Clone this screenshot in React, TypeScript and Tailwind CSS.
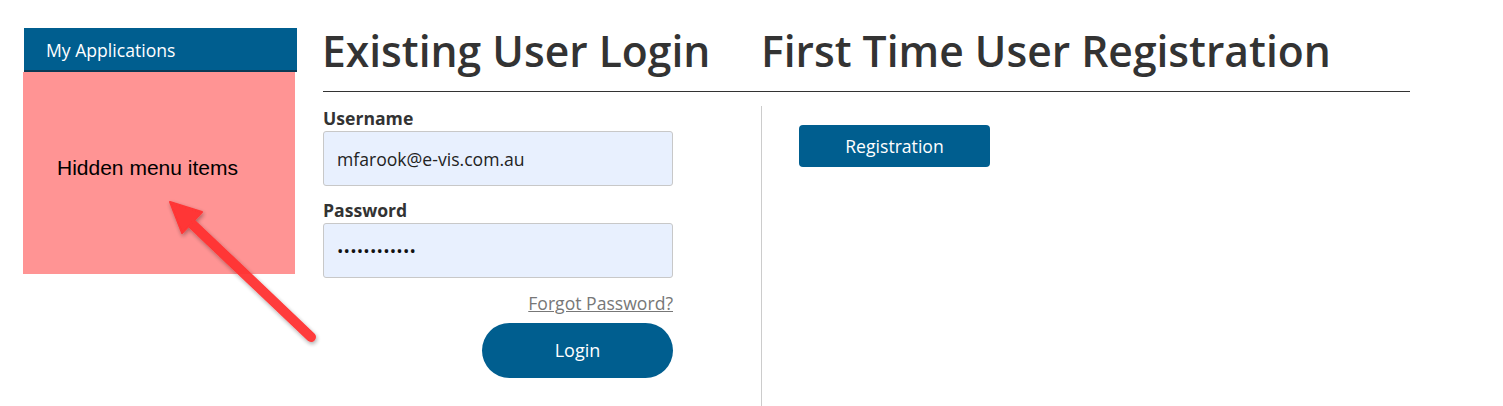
import React from "react";

const OS = "font-['Open_Sans',sans-serif]";

function Arrow() {
  return (
    <svg
      className="absolute left-0 top-0 pointer-events-none"
      width="360"
      height="406"
      viewBox="0 0 360 406"
    >
      <defs>
        <filter id="sh" x="-20%" y="-20%" width="140%" height="140%">
          <feDropShadow dx="1" dy="2" stdDeviation="2" floodColor="#000" floodOpacity="0.35" />
        </filter>
      </defs>
      <g filter="url(#sh)" opacity="0.95">
        <line x1="311" y1="337" x2="190" y2="222" stroke="#ff3030" strokeWidth="10" strokeLinecap="round" />
        <polygon points="170,202 202,212 182,233" fill="#ff3030" stroke="#ff3030" strokeWidth="2" strokeLinejoin="round" />
      </g>
    </svg>
  );
}

export default function App() {
  return (
    <div className={`relative h-[406px] w-[1503px] overflow-hidden bg-white ${OS}`}>
      <div className="flex pt-[28px] pl-[23px]">
        {/* Sidebar */}
        <aside className="w-[274px] shrink-0">
          <div className="ml-[1px] h-[44px] bg-[#005e8f] border-b-2 border-[#0b3a55] pl-[22px] pt-[10px] text-[17.6px] leading-[24px] text-white">
            My Applications
          </div>
          <div className="w-[272px] h-[202px] bg-[#ff9494] pl-[34px] pt-[84px] font-['Liberation_Sans',Arial,sans-serif] text-[21px] leading-[24px] text-black">
            Hidden menu items
          </div>
        </aside>

        {/* Main */}
        <main className="ml-[26px] w-[1087px]">
          <div className="flex text-[42.6px] leading-[44px] font-semibold text-[#333]">
            <h1 className="w-[438px] -ml-[1px]">Existing User Login</h1>
            <h1 className="ml-[1px]">First Time User Registration</h1>
          </div>
          <div className="mt-[19px] h-px bg-[#333]" />
          <div className="mt-[14px] flex h-[320px]">
            <section className="w-[438px] shrink-0">
              <form className="w-[350px] flex flex-col">
                <label className="text-[17.6px] leading-[24px] font-bold text-[#333]">Username</label>
                <input
                  readOnly
                  value="mfarook@e-vis.com.au"
                  className="mt-[1px] h-[55px] w-[350px] rounded-[3px] border border-[#c8c8c8] bg-[#e8f0fe] px-[13px] text-[17.6px] text-[#222] outline-none"
                />
                <label className="mt-[12px] text-[17.6px] leading-[24px] font-bold text-[#333]">Password</label>
                <input
                  readOnly
                  value="••••••••••••"
                  className="mt-[1px] h-[55px] w-[350px] rounded-[3px] border border-[#c8c8c8] bg-[#e8f0fe] px-[13px] text-[17px] text-[#111] tracking-[0.2px] outline-none"
                />
                <a href="#" className="mt-[13px] self-end text-[17.6px] leading-[24px] text-[#777] underline">
                  Forgot Password?
                </a>
                <button
                  type="button"
                  className="mt-[8px] self-end h-[55px] w-[191px] rounded-full bg-[#005e8f] text-[18px] text-white"
                >
                  Login
                </button>
              </form>
            </section>
            <section className="border-l border-[#cccccc] pl-[37px] pt-[19px]">
              <button
                type="button"
                className="h-[42px] w-[191px] rounded-[4px] bg-[#005e8f] text-[17.6px] text-white"
              >
                Registration
              </button>
            </section>
          </div>
        </main>
      </div>
      <Arrow />
    </div>
  );
}
